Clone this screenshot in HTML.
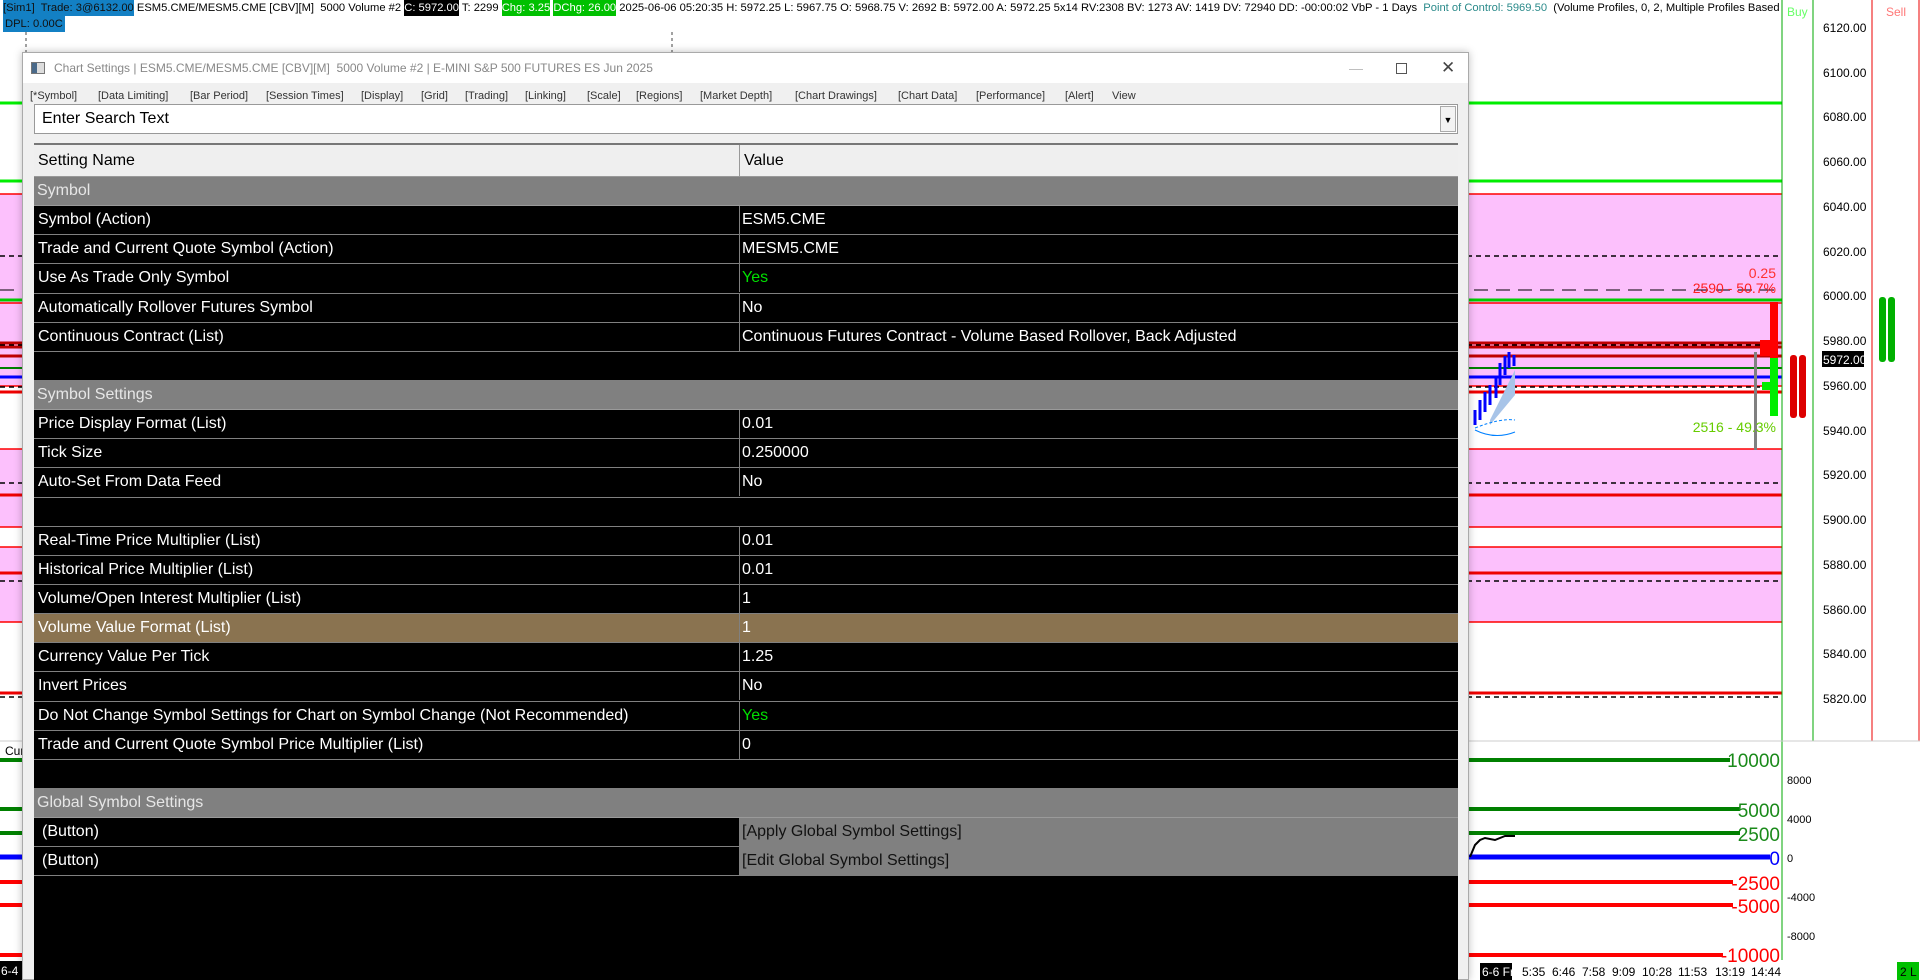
<!DOCTYPE html>
<html><head><meta charset="utf-8">
<style>
*{margin:0;padding:0;box-sizing:border-box}
body{width:1920px;height:980px;overflow:hidden;background:#fff;position:relative;font-family:"Liberation Sans",sans-serif}
svg.bg{position:absolute;left:0;top:0}
.top{position:absolute;left:3px;top:0;height:16px;line-height:16px;font-size:11.2px;white-space:nowrap;width:1779px;overflow:hidden;color:#000}
.top span{display:inline-block}
.blue{background:#1380c4;color:#111}
.blk{background:#000;color:#fff}
.grn{background:#00c000;color:#fff}
.dpl{position:absolute;left:3px;top:16px;height:16px;line-height:16px;font-size:11.2px;background:#1380c4;color:#111;padding:0 2px}
.dlg{position:absolute;left:22px;top:52px;width:1447px;height:928px;background:#f0f0f0;border:1px solid #aaa;box-shadow:0 0 8px rgba(0,0,0,.25)}
.title{position:absolute;left:0;top:0;width:100%;height:30px;background:#fff;font-size:12px;color:#888;line-height:30px}
.title .ic{position:absolute;left:8px;top:9px;width:14px;height:12px;border:1px solid #777;background:linear-gradient(90deg,#4a6a8a 40%,#ddd 40%)}
.title .t{position:absolute;left:31px}
.menu{position:absolute;top:34px;height:18px;font-size:11px;line-height:18px;color:#333}
.menu span{position:absolute;white-space:nowrap}
.search{position:absolute;left:11px;top:51px;width:1424px;height:30px;background:#fff;border:1px solid #999;font-size:16px;line-height:28px;padding-left:7px;color:#000}
.search .dd{position:absolute;right:1px;top:1px;width:16px;height:26px;border:1px solid #aaa;background:#f3f3f3;font-size:9px;text-align:center;line-height:26px}
.grid{position:absolute;left:11px;top:90px;width:1424px;height:837px;background:#000;border-top:2px solid #777}
.hdr{height:32px;background:#efefef;font-size:16px;line-height:32px;color:#000;position:relative;border-bottom:1px solid #999}
.hdr .v{position:absolute;left:705px;top:0;height:32px;border-left:1px solid #999;padding-left:4px}
.row{height:29.15px;position:relative;border-bottom:1px solid #808080;font-size:16px;line-height:28px;color:#fff;white-space:nowrap}
.row .n{position:absolute;left:0;top:0;width:705px;padding-left:4px;height:28px}
.row .v{position:absolute;left:705px;top:0;right:0;height:28px;border-left:1px solid #808080;padding-left:2px}
.sec{background:#808080;color:#e6e6e6;border-bottom:1px solid #9a9a9a}
.sec .n{padding-left:3px}
.br{background:#8a7350}
.g{color:#00e000}
.btn .v{background:#808080;color:#111}
.btn .n{padding-left:8px}
</style></head><body>
<svg class="bg" width="1920" height="980" xmlns="http://www.w3.org/2000/svg">
<rect x="0" y="194" width="1782" height="192" fill="#fcc0fc"/>
<rect x="0" y="449" width="1782" height="78" fill="#fcc0fc"/>
<rect x="0" y="547" width="1782" height="75" fill="#fcc0fc"/>
<g stroke="#ff0000" stroke-width="1.5">
<line x1="0" y1="194" x2="1782" y2="194"/><line x1="0" y1="303" x2="1782" y2="303"/>
<line x1="0" y1="449" x2="1782" y2="449"/><line x1="0" y1="527" x2="1782" y2="527"/>
<line x1="0" y1="547" x2="1782" y2="547"/><line x1="0" y1="622" x2="1782" y2="622"/>
<line x1="0" y1="386" x2="1782" y2="386"/>
</g>
<g stroke="#ee0000" stroke-width="3">
<line x1="0" y1="495" x2="1782" y2="495"/><line x1="0" y1="573" x2="1782" y2="573"/>
<line x1="0" y1="693" x2="1782" y2="693"/><line x1="0" y1="392" x2="1782" y2="392"/>
</g>
<g stroke="#c00000" stroke-width="3">
<line x1="0" y1="343" x2="1782" y2="343"/><line x1="0" y1="347" x2="1782" y2="347"/><line x1="0" y1="356" x2="1782" y2="356"/>
</g>
<g stroke="#000" stroke-width="1.5" stroke-dasharray="5,4">
<line x1="0" y1="256" x2="1782" y2="256"/><line x1="0" y1="345" x2="1782" y2="345"/>
<line x1="0" y1="387" x2="1782" y2="387"/><line x1="0" y1="483" x2="1782" y2="483"/>
<line x1="0" y1="581" x2="1782" y2="581"/><line x1="0" y1="697" x2="1782" y2="697"/>
</g>
<line x1="0" y1="290" x2="1782" y2="290" stroke="#000" stroke-width="1" stroke-dasharray="14,8"/>
<line x1="0" y1="103" x2="1782" y2="103" stroke="#00ee00" stroke-width="3"/>
<line x1="0" y1="181" x2="1782" y2="181" stroke="#00ee00" stroke-width="3"/>
<line x1="0" y1="300" x2="1782" y2="300" stroke="#00cc00" stroke-width="3"/>
<line x1="0" y1="368" x2="1782" y2="368" stroke="#008000" stroke-width="2"/>
<line x1="0" y1="377" x2="1782" y2="377" stroke="#0000ff" stroke-width="3"/>
<line x1="26" y1="32" x2="26" y2="52" stroke="#444" stroke-dasharray="3,3"/>
<line x1="672" y1="32" x2="672" y2="52" stroke="#444" stroke-dasharray="3,3"/>
<polygon points="1490,420 1515,370 1515,395 1490,425" fill="#a8c4e8"/>
<g stroke="#0000ff" stroke-width="3">
<line x1="1475" y1="410" x2="1475" y2="425"/><line x1="1480" y1="400" x2="1480" y2="420"/><line x1="1485" y1="392" x2="1485" y2="412"/>
<line x1="1490" y1="385" x2="1490" y2="405"/><line x1="1496" y1="376" x2="1496" y2="398"/><line x1="1500" y1="363" x2="1500" y2="385"/>
<line x1="1505" y1="356" x2="1505" y2="375"/><line x1="1509" y1="352" x2="1509" y2="368"/><line x1="1514" y1="355" x2="1514" y2="366"/>
</g>
<path d="M1475 428 Q1500 418 1515 420" stroke="#0080ff" fill="none" stroke-dasharray="3,2"/>
<path d="M1475 430 Q1495 440 1515 432" stroke="#0080ff" fill="none"/>
<rect x="1770" y="302" width="8" height="60" fill="#ff0000"/><rect x="1760" y="340" width="18" height="16" fill="#ff0000"/>
<rect x="1770" y="358" width="8" height="58" fill="#00ee00"/><rect x="1762" y="382" width="16" height="8" fill="#00ee00"/>
<rect x="1754" y="352" width="3" height="98" fill="#808080"/>
<text x="1776" y="278" font-size="14" fill="#ff3030" text-anchor="end">0.25</text>
<text x="1776" y="293" font-size="14" fill="#ff2020" text-anchor="end">2590 - 50.7%</text>
<text x="1776" y="432" font-size="14" fill="#66cc00" text-anchor="end">2516 - 49.3%</text>
<line x1="1782" y1="0" x2="1782" y2="960" stroke="#00aa00"/>
<line x1="1813" y1="0" x2="1813" y2="741" stroke="#00aa00"/>
<line x1="1872" y1="0" x2="1872" y2="741" stroke="#ee0000"/>
<line x1="1919" y1="0" x2="1919" y2="741" stroke="#ee0000"/>
<text x="1787" y="16" font-size="12" fill="#66ff66">Buy</text>
<text x="1886" y="16" font-size="12" fill="#ff7777">Sell</text>
<g font-size="12" fill="#000">
<text x="1823" y="32">6120.00</text><text x="1823" y="77">6100.00</text><text x="1823" y="121">6080.00</text>
<text x="1823" y="166">6060.00</text><text x="1823" y="211">6040.00</text><text x="1823" y="256">6020.00</text>
<text x="1823" y="300">6000.00</text><text x="1823" y="345">5980.00</text><text x="1823" y="390">5960.00</text>
<text x="1823" y="435">5940.00</text><text x="1823" y="479">5920.00</text><text x="1823" y="524">5900.00</text>
<text x="1823" y="569">5880.00</text><text x="1823" y="614">5860.00</text><text x="1823" y="658">5840.00</text>
<text x="1823" y="703">5820.00</text>
</g>
<rect x="1822" y="351" width="42" height="16" fill="#000"/><text x="1823" y="364" font-size="12" fill="#fff">5972.00</text>
<rect x="1790" y="355" width="7" height="63" rx="3" fill="#dd0000"/><rect x="1799" y="355" width="7" height="63" rx="3" fill="#dd0000"/>
<rect x="1879" y="297" width="7" height="65" rx="3" fill="#00b000"/><rect x="1888" y="297" width="7" height="65" rx="3" fill="#00b000"/>
<line x1="0" y1="741" x2="1920" y2="741" stroke="#ccc"/>
<text x="5" y="755" font-size="12" fill="#000">Cur</text>
<g stroke-width="4">
<line x1="0" y1="760" x2="1730" y2="760" stroke="#008000"/><line x1="0" y1="809" x2="1740" y2="809" stroke="#008000"/>
<line x1="0" y1="833" x2="1740" y2="833" stroke="#008000"/><line x1="0" y1="857" x2="1770" y2="857" stroke="#0000ff" stroke-width="5"/>
<line x1="0" y1="882" x2="1733" y2="882" stroke="#ff0000"/><line x1="0" y1="905" x2="1733" y2="905" stroke="#ff0000"/>
<line x1="0" y1="955" x2="1723" y2="955" stroke="#ff0000"/>
</g>
<path d="M1470 857 L1475 845 L1480 840 L1485 838 L1495 840 L1505 836 L1515 836" stroke="#000" fill="none" stroke-width="2"/>
<g font-size="19" text-anchor="end">
<text x="1780" y="767" fill="#1a8a1a">10000</text><text x="1780" y="817" fill="#1a8a1a">5000</text>
<text x="1780" y="841" fill="#1a8a1a">2500</text><text x="1780" y="865" fill="#0000ff">0</text>
<text x="1780" y="890" fill="#ff0000">-2500</text><text x="1780" y="913" fill="#ff0000">-5000</text>
<text x="1780" y="962" fill="#ff0000">-10000</text>
</g>
<g font-size="11" fill="#000">
<text x="1787" y="784">8000</text><text x="1787" y="823">4000</text><text x="1787" y="862">0</text>
<text x="1787" y="901">-4000</text><text x="1787" y="940">-8000</text>
</g>
<rect x="0" y="961" width="22" height="19" fill="#000"/><text x="1" y="975" font-size="12" fill="#fff">6-4</text>
<rect x="1480" y="963" width="32" height="17" fill="#000"/><text x="1482" y="976" font-size="12" fill="#fff">6-6 Fr</text>
<g font-size="12" fill="#000">
<text x="1522" y="976">5:35</text><text x="1552" y="976">6:46</text><text x="1582" y="976">7:58</text>
<text x="1612" y="976">9:09</text><text x="1642" y="976">10:28</text><text x="1678" y="976">11:53</text>
<text x="1715" y="976">13:19</text><text x="1751" y="976">14:44</text>
</g>
<rect x="1897" y="962" width="22" height="18" fill="#00c000"/><text x="1900" y="976" font-size="12" fill="#000">2 L</text>
</svg>

<div class="top"><span class="blue">[Sim1]&nbsp; Trade: 3@6132.00</span> ESM5.CME/MESM5.CME [CBV][M]&nbsp; 5000 Volume #2 <span class="blk">C: 5972.00</span> T: 2299 <span class="grn">Chg: 3.25</span> <span class="grn">DChg: 26.00</span> 2025-06-06 05:20:35 H: 5972.25 L: 5967.75 O: 5968.75 V: 2692 B: 5972.00 A: 5972.25 5x14 RV:2308 BV: 1273 AV: 1419 DV: 72940 DD: -00:00:02 VbP - 1 Days&nbsp; <span style="color:#2a8a8a">Point of Control: 5969.50</span>&nbsp; (Volume Profiles, 0, 2, Multiple Profiles Based</div>
<div class="dpl">DPL: 0.00C</div>

<div class="dlg">
 <div class="title"><div class="ic"></div><span class="t">Chart Settings | ESM5.CME/MESM5.CME [CBV][M]&nbsp; 5000 Volume #2 | E-MINI S&amp;P 500 FUTURES ES Jun 2025</span>
  <span style="position:absolute;left:1326px;top:0;color:#bbb;font-size:14px">—</span>
  <span style="position:absolute;left:1373px;top:10px;width:11px;height:11px;border:1px solid #555"></span>
  <span style="position:absolute;left:1418px;top:0;font-size:17px;color:#444">✕</span>
 </div>
 <div class="menu">
  <span style="left:7px">[*Symbol]</span><span style="left:75px">[Data Limiting]</span><span style="left:167px">[Bar Period]</span>
  <span style="left:243px">[Session Times]</span><span style="left:338px">[Display]</span><span style="left:398px">[Grid]</span>
  <span style="left:442px">[Trading]</span><span style="left:502px">[Linking]</span><span style="left:564px">[Scale]</span>
  <span style="left:613px">[Regions]</span><span style="left:677px">[Market Depth]</span><span style="left:772px">[Chart Drawings]</span>
  <span style="left:875px">[Chart Data]</span><span style="left:953px">[Performance]</span><span style="left:1042px">[Alert]</span>
  <span style="left:1089px">View</span>
 </div>
 <div class="search">Enter Search Text<div class="dd">▼</div></div>
 <div class="grid">
  <div class="hdr"><span style="padding-left:4px">Setting Name</span><span class="v">Value</span></div>
  <div class="row sec"><span class="n">Symbol</span></div>
  <div class="row"><span class="n">Symbol (Action)</span><span class="v">ESM5.CME</span></div>
  <div class="row"><span class="n">Trade and Current Quote Symbol (Action)</span><span class="v">MESM5.CME</span></div>
  <div class="row"><span class="n">Use As Trade Only Symbol</span><span class="v g">Yes</span></div>
  <div class="row"><span class="n">Automatically Rollover Futures Symbol</span><span class="v">No</span></div>
  <div class="row"><span class="n">Continuous Contract (List)</span><span class="v">Continuous Futures Contract - Volume Based Rollover, Back Adjusted</span></div>
  <div class="row"></div>
  <div class="row sec"><span class="n">Symbol Settings</span></div>
  <div class="row"><span class="n">Price Display Format (List)</span><span class="v">0.01</span></div>
  <div class="row"><span class="n">Tick Size</span><span class="v">0.250000</span></div>
  <div class="row"><span class="n">Auto-Set From Data Feed</span><span class="v">No</span></div>
  <div class="row"></div>
  <div class="row"><span class="n">Real-Time Price Multiplier (List)</span><span class="v">0.01</span></div>
  <div class="row"><span class="n">Historical Price Multiplier (List)</span><span class="v">0.01</span></div>
  <div class="row"><span class="n">Volume/Open Interest Multiplier (List)</span><span class="v">1</span></div>
  <div class="row br"><span class="n">Volume Value Format (List)</span><span class="v">1</span></div>
  <div class="row"><span class="n">Currency Value Per Tick</span><span class="v">1.25</span></div>
  <div class="row"><span class="n">Invert Prices</span><span class="v">No</span></div>
  <div class="row"><span class="n">Do Not Change Symbol Settings for Chart on Symbol Change (Not Recommended)</span><span class="v g">Yes</span></div>
  <div class="row"><span class="n">Trade and Current Quote Symbol Price Multiplier (List)</span><span class="v">0</span></div>
  <div class="row"></div>
  <div class="row sec"><span class="n">Global Symbol Settings</span></div>
  <div class="row btn"><span class="n">(Button)</span><span class="v">[Apply Global Symbol Settings]</span></div>
  <div class="row btn"><span class="n">(Button)</span><span class="v">[Edit Global Symbol Settings]</span></div>
 </div>
</div>
</body></html>
